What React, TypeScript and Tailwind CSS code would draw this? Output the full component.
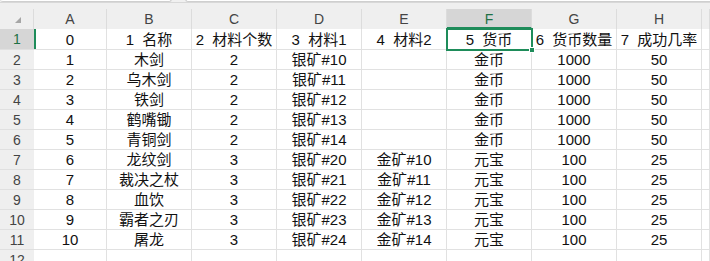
import type { ReactNode } from 'react'

function cx(...classes: Array<string | false | null | undefined>) {
  return classes.filter(Boolean).join(' ')
}

const columns = ['A', 'B', 'C', 'D', 'E', 'F', 'G', 'H', '']

const headerRow = ['0', '1  名称', '2  材料个数', '3  材料1', '4  材料2', '5  货币', '6  货币数量', '7  成功几率', '']

const rows: string[][] = [
  ['1', '木剑', '2', '银矿#10', '', '金币', '1000', '50'],
  ['2', '乌木剑', '2', '银矿#11', '', '金币', '1000', '50'],
  ['3', '铁剑', '2', '银矿#12', '', '金币', '1000', '50'],
  ['4', '鹤嘴锄', '2', '银矿#13', '', '金币', '1000', '50'],
  ['5', '青铜剑', '2', '银矿#14', '', '金币', '1000', '50'],
  ['6', '龙纹剑', '3', '银矿#20', '金矿#10', '元宝', '100', '25'],
  ['7', '裁决之杖', '3', '银矿#21', '金矿#11', '元宝', '100', '25'],
  ['8', '血饮', '3', '银矿#22', '金矿#12', '元宝', '100', '25'],
  ['9', '霸者之刃', '3', '银矿#23', '金矿#13', '元宝', '100', '25'],
  ['10', '屠龙', '3', '银矿#24', '金矿#14', '元宝', '100', '25'],
  ['', '', '', '', '', '', '', ''],
]

const gridCols = 'grid grid-cols-[34px_73px_85px_85px_85px_85px_85px_85px_85px_1fr]'

function Cell({ children, className }: { children?: ReactNode; className?: string }) {
  return (
    <div
      className={cx(
        'flex items-center justify-center whitespace-pre border-b border-r border-[#e1e1e1] text-[15px] leading-none text-[#111]',
        className
      )}
    >
      {children}
    </div>
  )
}

export default function App() {
  return (
    <div
      className="relative h-[261px] w-[710px] overflow-hidden bg-white"
      style={{ fontFamily: '"Liberation Sans", "Noto Sans CJK SC", sans-serif' }}
    >
      {/* formula bar edge */}
      <div className="flex h-[3px] items-end gap-[13px] border-b border-[#d8d8d8] bg-[#f0f0f0]">
        <div className="h-[3px] w-[172px] rounded-b-[3px] border-b border-r border-[#cfcfcf] bg-white" />
        <div className="h-[3px] flex-1 rounded-bl-[3px] border-b border-l border-[#cfcfcf] bg-white" />
      </div>
      <div className="h-[6px] bg-[#efefef]" />

      {/* column headers */}
      <div className={cx(gridCols, 'h-[20px] bg-[#efefef]')}>
        <div className="relative border-r border-[#dcdcdc]">
          <div className="absolute left-[15px] top-[8px] h-0 w-0 border-b-[6px] border-l-[6px] border-b-[#a6a6a6] border-l-transparent" />
        </div>
        {columns.map((c, i) => (
          <div
            key={i}
            className={cx(
              'flex items-center justify-center border-r border-[#dcdcdc] text-[14px] leading-none',
              c === 'F'
                ? 'border-b-2 border-b-[#1e8c5a] bg-[#d6d6d6] pt-[2px] text-[#1e7145]'
                : 'text-[#444]'
            )}
          >
            {c}
          </div>
        ))}
      </div>

      {/* row 1 */}
      <div className={cx(gridCols, 'h-[21px]')}>
        <div className="flex items-center justify-center border-b border-[#e0e0e0] bg-[#d6d6d6] text-[14px] leading-none text-[#1e7145]">
          1
        </div>
        {headerRow.map((v, i) => (
          <Cell key={i} className={i === 0 ? 'shadow-[inset_2px_0_0_#1e8c5a]' : undefined}>
            {v}
          </Cell>
        ))}
      </div>

      {/* data rows */}
      {rows.map((r, ri) => (
        <div key={ri} className={cx(gridCols, 'h-[20px]')}>
          <div className="flex items-center justify-center border-b border-[#e0e0e0] bg-[#efefef] text-[14px] leading-none text-[#444]">
            {ri + 2}
          </div>
          {r.map((v, i) => (
            <Cell key={i}>{v}</Cell>
          ))}
          <Cell />
        </div>
      ))}

      {/* selection F1 */}
      <div className="absolute left-[446px] top-[28px] h-[23px] w-[87px] border-2 border-[#1e8c5a]">
        <div className="absolute -bottom-[4px] -right-[4px] h-[6px] w-[6px] border border-white bg-[#1e8c5a]" />
      </div>
    </div>
  )
}
